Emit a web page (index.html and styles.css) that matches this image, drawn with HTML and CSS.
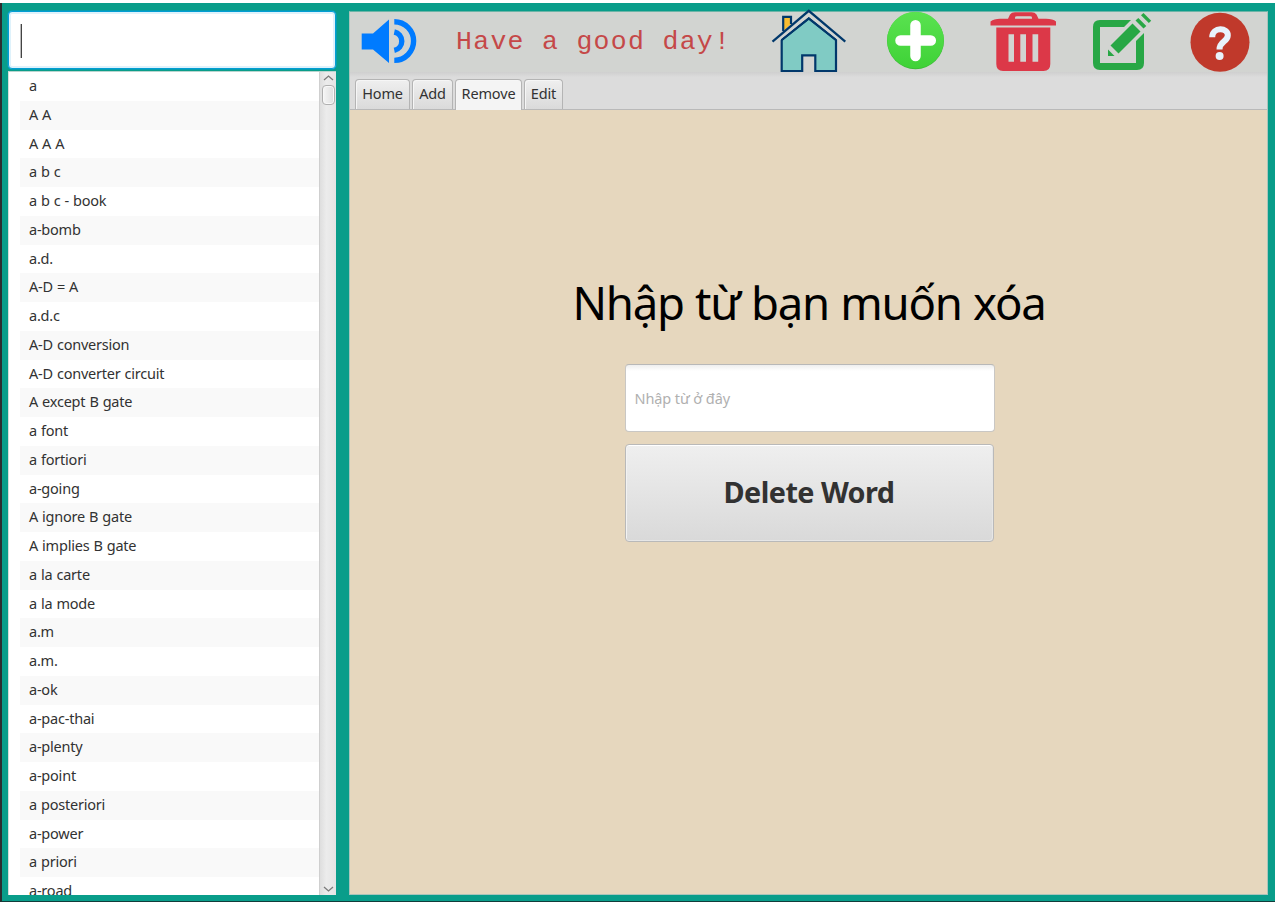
FILE: index.html
```html
<!DOCTYPE html>
<html lang="vi">
<head>
<meta charset="utf-8">
<title>Dictionary</title>
<link rel="stylesheet" href="styles.css">
</head>
<body>
<div class="app">
  <aside class="sidebar">
    <div class="search"><span class="caret"></span></div>
    <div class="list">
      <ul class="words">
        <li>a</li><li>A A</li><li>A A A</li><li>a b c</li><li>a b c - book</li><li>a-bomb</li><li>a.d.</li><li>A-D = A</li><li>a.d.c</li><li>A-D conversion</li><li>A-D converter circuit</li><li>A except B gate</li><li>a font</li><li>a fortiori</li><li>a-going</li><li>A ignore B gate</li><li>A implies B gate</li><li>a la carte</li><li>a la mode</li><li>a.m</li><li>a.m.</li><li>a-ok</li><li>a-pac-thai</li><li>a-plenty</li><li>a-point</li><li>a posteriori</li><li>a-power</li><li>a priori</li><li>a-road</li>
      </ul>
      <div class="scrollbar">
        <svg class="arrow" width="11" height="6" viewBox="0 0 11 6"><path d="M1 5 5.500 1 10 5"/></svg>
        <div class="thumb"></div>
        <svg class="arrow down" width="11" height="6" viewBox="0 0 11 6"><path d="M1 1 5.500 5 10 1"/></svg>
      </div>
    </div>
  </aside>
  <main class="main">
    <header class="header">
      <svg class="icons" width="918" height="68" viewBox="350 4 918 68">
        <defs><linearGradient id="green" x1="0" y1="0" x2="0" y2="1"><stop offset="0" stop-color="#5ae250"/><stop offset="1" stop-color="#3fd237"/></linearGradient></defs>
        <path fill="#007bff" d="M361.700 33.500H373L389 19.500V63L373 49.500H361.700z"/>
        <g fill="none" stroke="#007bff" stroke-width="5.400"><path d="M394.300 21.800A19.300 19.300 0 0 1 394.300 60.400"/><path d="M394.300 32A9.400 9.400 0 0 1 394.300 50.400"/></g>
        <g stroke="#01386b" stroke-width="2.200">
          <path fill="#f9bd30" d="M783.200 31V16.900H791V24"/>
          <path fill="#80cbc4" d="M781.700 71.200V40L808.800 18.500 836 40V71.200H815.300V55.300H802.200V71.200z"/>
          <path fill="none" stroke="#d2d4d1" stroke-width="4" d="M777 40 808.800 14.500 841 40"/>
          <path fill="none" d="M772.500 41.600 808.800 10.800 845.300 41.600"/>
          <path fill="none" d="M781.700 40 808.800 18.500 836 40"/>
        </g>
        <circle cx="915.500" cy="40.700" r="28.500" fill="#3bbd36"/><circle cx="915.500" cy="40" r="28.300" fill="url(#green)"/>
        <path fill="none" stroke="#fff" stroke-width="10.500" stroke-linecap="round" d="M915.500 25.300V56M900.500 40.500H930.800"/>
        <g fill="#dc3848">
          <path d="M990.500 25.500V21.500Q994 18.800 1000 18.800H1008L1010 14.500Q1011.500 12.200 1015 12.200H1031.500Q1035 12.200 1036.500 14.500L1038.500 18.800H1046Q1053 18.800 1056 21.500V25.500z"/>
          <path fill-rule="evenodd" d="M996.300 27.500H1050.300V64Q1050.300 71 1043.500 71H1003Q996.300 71 996.300 64zM1008.500 34.300V61.800H1014V34.300zM1020.300 34.300V61.800H1026V34.300zM1032.500 34.300V61.800H1038.200V34.300z"/>
        </g>
        <path fill="#d2d4d1" d="M1015 18.700V17.200Q1015 16.200 1017 16.200H1030Q1032 16.200 1032 17.200V18.700z"/>
        <g fill="#28a745">
          <path d="M1131 20H1100Q1093 20 1093 27V63Q1093 70 1100 70H1137Q1144 70 1144 63V33L1136 41V63H1100V27H1124z"/>
          <path d="M1132.500 23.500 1140.500 31.500 1118.500 53.500 1110.500 45.500z"/><path d="M1108 49.500 1114.500 56H1108z"/>
          <path d="M1138.300 18 1146.300 26 1143.500 28.500 1135.500 20.500z"/><path d="M1143.500 13 1151.200 20.700 1148.800 23 1141 15.300z"/>
        </g>
        <circle cx="1220" cy="42.200" r="29.500" fill="#c0392b"/>
        <path fill="none" stroke="#e8f3fc" stroke-width="6" d="M1212.200 37.200C1212.400 26.500 1228.400 27.500 1227.800 35.500C1227.500 42 1219.500 41 1219.500 49.500"/><circle cx="1219.600" cy="56" r="4" fill="#e8f3fc"/>
      </svg>
      <div class="greeting">Have a good day!</div>
    </header>
    <nav class="tabs">
      <div class="tab home">Home</div><div class="tab add">Add</div><div class="tab remove active">Remove</div><div class="tab edit">Edit</div>
    </nav>
    <section class="content">
      <h1 class="title"><span>Nhập từ bạn muốn xóa</span></h1>
      <div class="field"><span>Nhập từ ở đây</span></div>
      <div class="button"><span>Delete Word</span></div>
    </section>
  </main>
</div>
</body>
</html>
```
FILE: styles.css
```css
* { box-sizing: border-box; }
body {
  margin: 0;
  width: 1275px;
  height: 902px;
  overflow: hidden;
  background: #fff;
  font-family: "Noto Sans", "Open Sans", sans-serif;
  color: #323232;
}
.app {
  display: flex;
  gap: 13px;
  height: 899px;
  margin-top: 3px;
  padding: 8px 7px 6px 6px;
  border-left: 2px solid #2b2d30;
  border-bottom: 1px solid #123c3a;
  background: #099d8a;
}
.sidebar { width: 328px; flex: none; display: flex; flex-direction: column; gap: 2px; }
.search {
  height: 58px;
  width: 328px;
  padding: 12px 12px;
  background: #fff;
  border: 1px solid #039ed3;
  border-radius: 4px;
  box-shadow: inset 0 0 0 2px #dff2fb, 0 0 0 0.5px #039ed3;
}
.caret { display: block; width: 1px; height: 34px; background: #444; box-shadow: -1px 0 0 #bbb; }
.list {
  flex: 1;
  min-height: 0;
  display: flex;
  overflow: hidden;
  background: #fff;
  border-top: 1px solid #b9d5cf;
  border-left: 1px solid #d5dedb;
}
.words { list-style: none; flex: 1; margin: 0 0 0 11px; padding: 0; }
.words li {
  height: 28.750px;
  padding-left: 9px;
  line-height: 27.600px;
  font-size: 14.500px;
  letter-spacing: -0.220px;
  word-spacing: 0.500px;
  white-space: nowrap;
}
.words li:nth-child(even) { background: #f9f9f9; }
.scrollbar {
  width: 17px;
  display: flex;
  flex-direction: column;
  align-items: center;
  padding: 3px 0 3px;
  border-left: 1px solid #cfcfcf;
  background: linear-gradient(90deg, #dedede, #ececec 40%, #e4e4e4);
}
.arrow { fill: none; stroke: #7b7b7b; stroke-width: 1.300; }
.down { margin-top: auto; }
.thumb {
  width: 13px;
  height: 20px;
  margin-top: 4px;
  border: 1px solid #b0b0b0;
  border-radius: 4px;
  background: linear-gradient(90deg, #f6f6f6, #dedede);
  box-shadow: inset 0 0 0 1px #f8f8f8;
}
.main { flex: 1; min-width: 0; display: flex; flex-direction: column; border: 1px solid #a9c4bb; border-top-color: #6db5a7; }
.header { height: 60px; flex: none; position: relative; background: #d2d4d1; }
.icons { position: absolute; left: 0; top: -8px; }
.greeting {
  position: absolute;
  left: 106px;
  top: 14px;
  font: 26.500px/32px "Liberation Mono", monospace;
  letter-spacing: 1.300px;
  color: #c54848;
  white-space: pre;
}
.tabs {
  height: 38px;
  flex: none;
  display: flex;
  align-items: flex-end;
  gap: 2px;
  padding-left: 5px;
  background: linear-gradient(#cfcfcf, #dcdcdc 5px);
  border-bottom: 1px solid #b9b9b9;
}
.tab {
  height: 30px;
  border: 1px solid #b4b4b4;
  border-bottom: 0;
  border-radius: 4px 4px 0 0;
  background: linear-gradient(#efefef, #dadada);
  box-shadow: inset 1px 1px 0 #f6f6f6;
  font-size: 14.500px;
  letter-spacing: -0.150px;
  line-height: 26px;
  text-align: center;
  white-space: nowrap;
}
.home { width: 55px; }
.add { width: 41px; }
.remove { width: 67px; }
.edit { width: 39px; }
.active { height: 31px; margin-bottom: -1px; background: #f4f4f4; }
.content {
  flex: 1;
  display: flex;
  flex-direction: column;
  align-items: center;
  padding: 160px 0 0 2px;
  background: #e6d7be;
}
.title {
  margin: 0 1px 0 0;
  height: 94px;
  font-size: 45.500px;
  line-height: 65px;
  font-weight: 400;
  letter-spacing: -1.250px;
  word-spacing: 0.800px;
  color: #000;
  white-space: nowrap;
}
.field {
  width: 370px;
  height: 68px;
  padding-left: 9px;
  background: linear-gradient(#eee, #fff 6px);
  border: 1px solid #c9c7c4;
  border-top-color: #b8b8b8;
  border-radius: 4px;
  font-size: 14.500px;
  letter-spacing: -0.100px;
  line-height: 67px;
  color: #b0b0b0;
}
.button {
  width: 369px;
  height: 98px;
  margin-top: 12px;
  margin-right: 1px;
  border: 1px solid #b9b9b9;
  border-radius: 4px;
  background: linear-gradient(#efefef, #d9d9d9);
  box-shadow: inset 0 1px 0 #fff, inset 1px 0 0 #f2f2f2, inset -1px -1px 0 #e6e6e6;
  font-size: 28.800px;
  font-weight: 700;
  letter-spacing: -0.550px;
  line-height: 94px;
  text-align: center;
}
```
